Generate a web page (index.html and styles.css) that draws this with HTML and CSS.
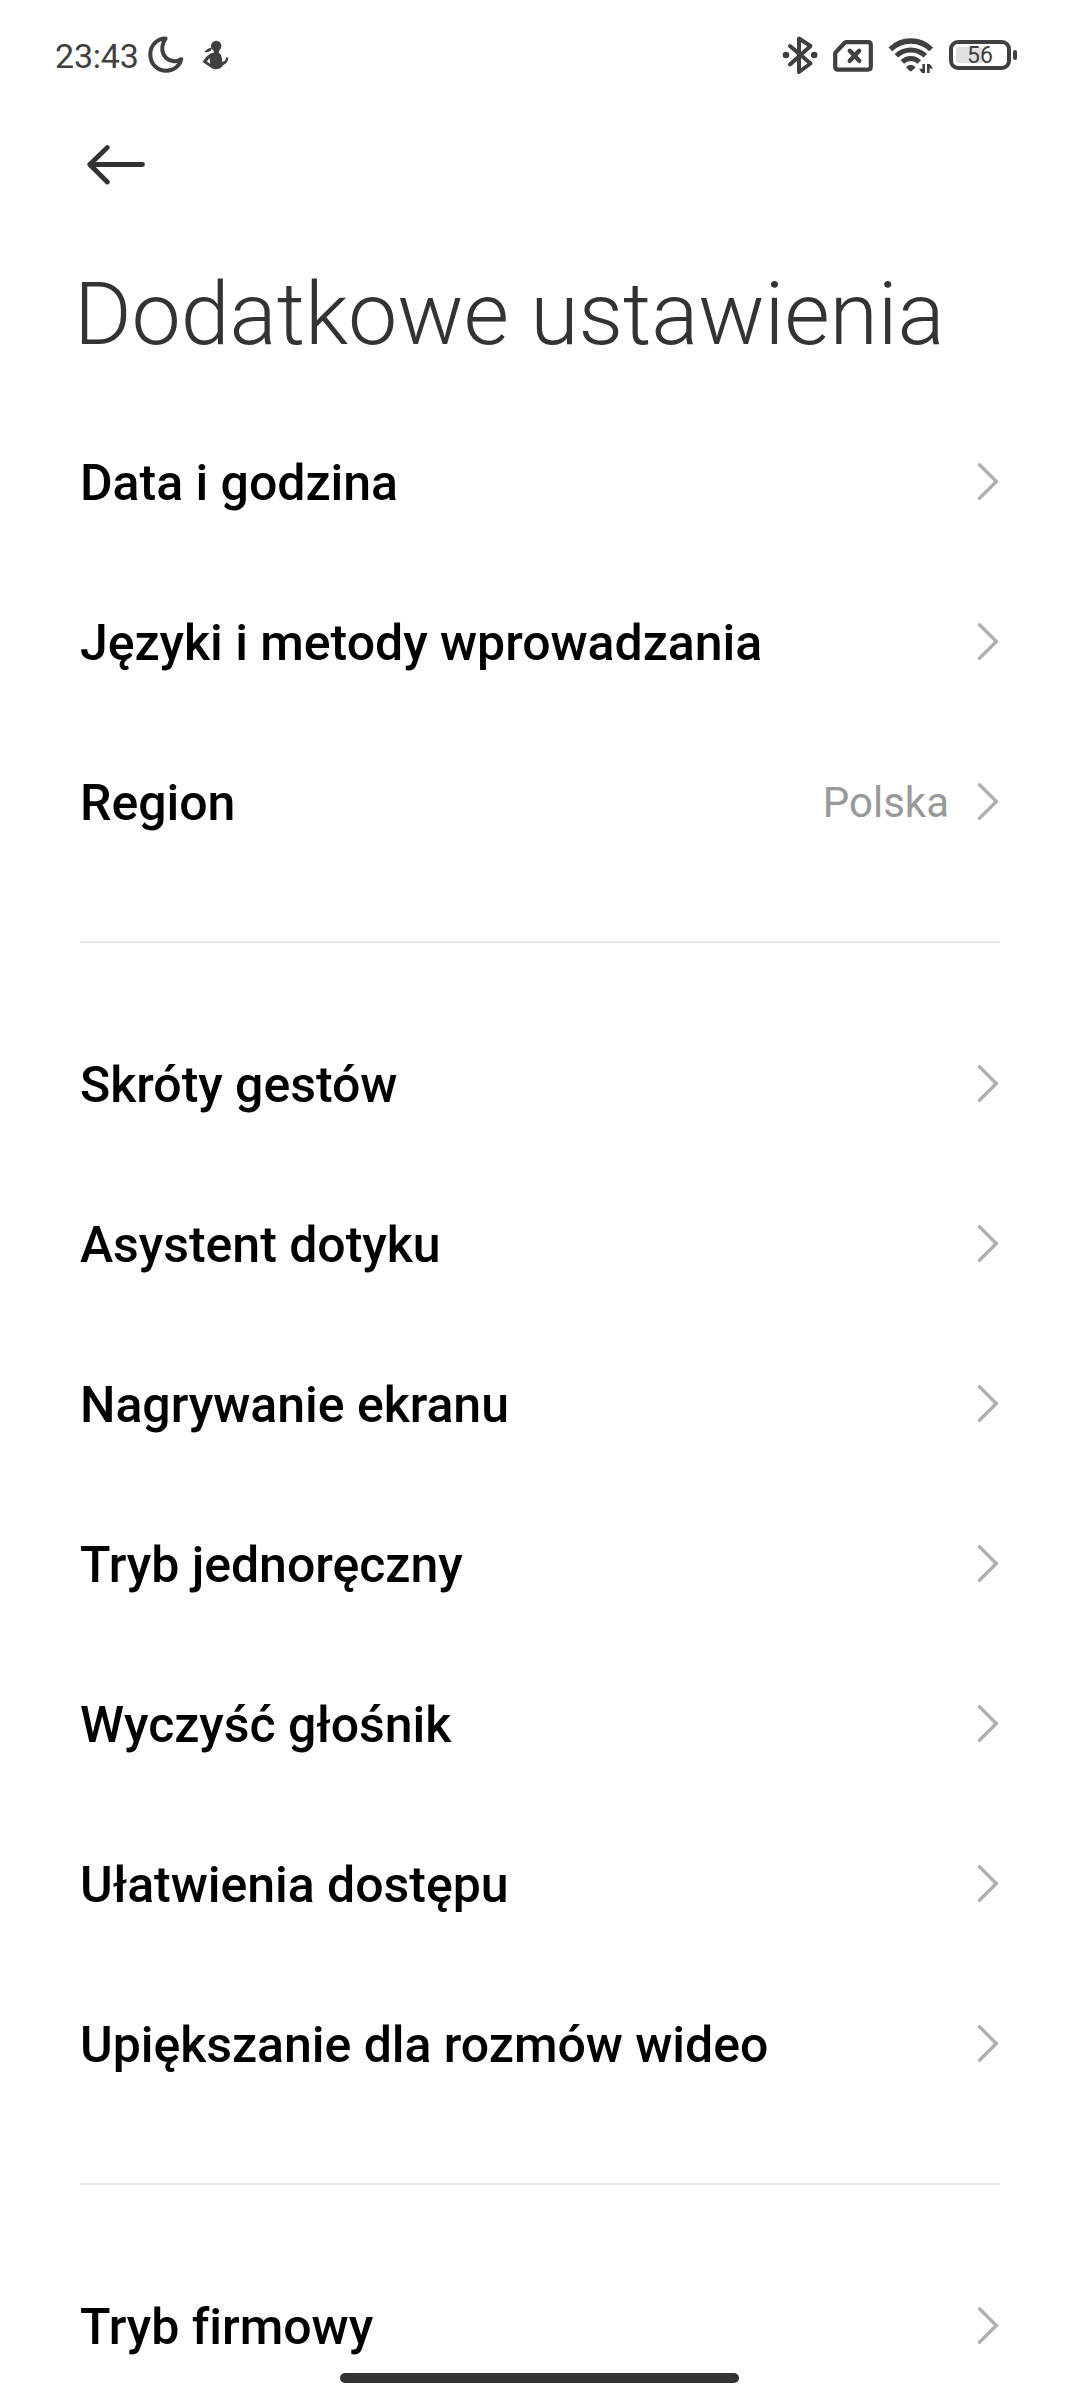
FILE: index.html
```html
<!DOCTYPE html>
<html lang="pl">
<head>
    <meta charset="UTF-8">
    <meta name="viewport" content="width=device-width, initial-scale=1.0">
    <title>Dodatkowe ustawienia</title>
    <link rel="stylesheet" href="styles.css">
</head>
<body>
    <svg width="0" height="0" class="sprite">
        <symbol id="chevron" viewBox="0 0 24 40">
            <path d="M3.5 3.7 L20.3 20.5 L3.5 37.3" fill="none" stroke="#b0b0b0" stroke-width="3.4" stroke-linecap="round" stroke-linejoin="miter"/>
        </symbol>
    </svg>
    <div class="screen">
        <div class="status-bar">
            <span class="time">23:43</span>
            <!-- Nie przeszkadzać -->
            <svg class="icon moon" width="36" height="38" viewBox="0 0 36 38">
                <path d="M17.6 2.6 C9 2.6 2.3 9.5 2.3 18.5 C2.3 27.8 9.2 34.8 18.3 34.8 C25.8 34.8 31.5 30 33.2 23.2 C31 24.9 28.5 25.5 26 25.3 C19.5 24.8 14.7 20 14.3 13.5 C14.1 9.2 15.4 5.6 17.6 2.6 Z" fill="none" stroke="#404040" stroke-width="4" stroke-linejoin="round"/>
            </svg>
            <svg class="icon figure" width="27" height="30" viewBox="0 0 27 30">
                <circle cx="14.2" cy="6" r="5.2" fill="#404040"/>
                <path d="M12 8 L17.5 9 L16.5 14 L11.5 14 Z M10 7.5 L9 10.5 Q6 12.8 2.5 12 Q5 8 10 7.5 Z" fill="#404040"/>
                <path d="M8.5 13.5 Q13 12 18 13.5 Q20.5 17 20 22 L23 20.8 L24.3 17.2 L26.2 17.5 Q26.5 22.5 21.5 25 Q18.5 29.3 13.5 29.2 Q9.5 29 7.5 26.5 L0.5 22 Q3.5 16.5 8.5 13.5 Z M7.5 18 L4.8 21.4 L8.2 23.8 Z" fill="#404040" fill-rule="evenodd"/>
            </svg>
            <div class="status-right">
                <!-- Bluetooth -->
                <svg class="icon bluetooth" width="36" height="40" viewBox="0 0 36 40">
                    <path d="M8 11 L28.5 28.5 L17 37 V3.5 L28.5 11 L8 29.5" fill="none" stroke="#404040" stroke-width="4" stroke-linecap="round" stroke-linejoin="round"/>
                    <circle cx="4" cy="20" r="3.3" fill="#404040"/>
                    <circle cx="32.2" cy="20" r="3.3" fill="#404040"/>
                </svg>
                <!-- Brak karty SIM -->
                <svg class="icon sim" width="40" height="32" viewBox="0 0 40 32">
                    <path d="M13.2 2.2 H35 Q37.8 2.2 37.8 5 V26.8 Q37.8 29.6 35 29.6 H5 Q2.2 29.6 2.2 26.8 V14 Q2.2 12.8 3 12 L11.5 3 Q12.2 2.2 13.2 2.2 Z" fill="none" stroke="#404040" stroke-width="4.2"/>
                    <path d="M16.8 10.8 L26.2 20.8 M26.2 10.8 L16.8 20.8" stroke="#404040" stroke-width="4.4" stroke-linecap="round"/>
                </svg>
                <!-- Wi-Fi -->
                <svg class="icon wifi" width="48" height="36" viewBox="0 0 48 36">
                    <path d="M2.4 12.4 A29 29 0 0 1 43.2 12.4" fill="none" stroke="#404040" stroke-width="5.4"/>
                    <path d="M8.3 18.7 A21 21 0 0 1 37.3 18.7" fill="none" stroke="#404040" stroke-width="5"/>
                    <path d="M14.3 25 A12 12 0 0 1 31.3 25" fill="none" stroke="#404040" stroke-width="5"/>
                    <path d="M18 30.5 Q19.5 27.8 22.8 27.8 Q26 27.8 27.6 30.5 L24 33.8 Q22.8 35 21.6 33.8 Z" fill="#404040"/>
                    <path d="M37 27 V36 H34 L31 31.8 H34.4 V27 Z M39 36 V27 H41.8 L45 31.4 H41.6 V36 Z" fill="#404040"/>
                </svg>
                <!-- Bateria -->
                <div class="battery">
                    <div class="battery-level"></div>
                    <span class="battery-text">56</span>
                </div>
                <div class="battery-cap"></div>
            </div>
        </div>

        <div class="toolbar">
            <svg class="back" width="58" height="40" viewBox="0 0 58 40">
                <path d="M20.3 2.6 L2.8 19.5 L20.3 37 M4 19.5 H55.5" fill="none" stroke="#333" stroke-width="4.8" stroke-linecap="round" stroke-linejoin="round"/>
            </svg>
        </div>

        <h1 class="title">Dodatkowe ustawienia</h1>

        <div class="list">
            <div class="row">
                <span class="label">Data i godzina</span>
                <svg class="chevron"><use href="#chevron"/></svg>
            </div>
            <div class="row">
                <span class="label">Języki i metody wprowadzania</span>
                <svg class="chevron"><use href="#chevron"/></svg>
            </div>
            <div class="row">
                <span class="label">Region</span>
                <span class="value">Polska</span>
                <svg class="chevron"><use href="#chevron"/></svg>
            </div>

            <div class="divider"></div>

            <div class="row">
                <span class="label">Skróty gestów</span>
                <svg class="chevron"><use href="#chevron"/></svg>
            </div>
            <div class="row">
                <span class="label">Asystent dotyku</span>
                <svg class="chevron"><use href="#chevron"/></svg>
            </div>
            <div class="row">
                <span class="label">Nagrywanie ekranu</span>
                <svg class="chevron"><use href="#chevron"/></svg>
            </div>
            <div class="row">
                <span class="label">Tryb jednoręczny</span>
                <svg class="chevron"><use href="#chevron"/></svg>
            </div>
            <div class="row">
                <span class="label">Wyczyść głośnik</span>
                <svg class="chevron"><use href="#chevron"/></svg>
            </div>
            <div class="row">
                <span class="label">Ułatwienia dostępu</span>
                <svg class="chevron"><use href="#chevron"/></svg>
            </div>
            <div class="row">
                <span class="label">Upiększanie dla rozmów wideo</span>
                <svg class="chevron"><use href="#chevron"/></svg>
            </div>

            <div class="divider"></div>

            <div class="row">
                <span class="label">Tryb firmowy</span>
                <svg class="chevron"><use href="#chevron"/></svg>
            </div>
        </div>

        <div class="home-bar"></div>
    </div>
</body>
</html>
```

FILE: styles.css
```css
body {
    margin: 0;
    background-color: #fefefe;
    font-family: Roboto, "Noto Sans", sans-serif;
    color: #000;
}

.sprite {
    position: absolute;
}

.screen {
    position: relative;
    width: 1080px;
    height: 2400px;
    overflow: hidden;
}

.status-bar {
    display: flex;
    align-items: center;
    height: 110px;
    padding: 0 63px 0 55px;
    box-sizing: border-box;
    color: #404040;
}

.icon {
    display: block;
    flex: none;
}

.time {
    width: 93px;
    font-size: 34px;
    font-weight: 450;
    line-height: 40px;
    letter-spacing: -0.2px;
    margin-top: 2px;
}

.figure {
    margin-left: 18px;
}

.status-right {
    display: flex;
    align-items: center;
    margin-left: auto;
}

.sim {
    margin: 2px 15px 0;
}

.battery {
    position: relative;
    width: 62px;
    height: 30px;
    margin-left: 13px;
    border: 4px solid #404040;
    border-radius: 9px;
    box-sizing: border-box;
    text-align: center;
}

.battery-level {
    position: absolute;
    left: 3px;
    top: 3px;
    width: 27px;
    height: 16px;
    border-radius: 3px;
    background-color: #e0e0e0;
}

.battery-text {
    position: relative;
    display: block;
    font-size: 23px;
    line-height: 24px;
}

.battery-cap {
    width: 4px;
    height: 10px;
    margin-left: 2px;
    border-radius: 2px;
    background-color: #404040;
}

.toolbar {
    display: flex;
    align-items: center;
    height: 108px;
    padding-left: 87px;
}

.back {
    margin-top: 2px;
}

.title {
    margin: 44px 0 0 74px;
    height: 139px;
    font-size: 88px;
    line-height: 104px;
    font-weight: 300;
    letter-spacing: -0.1px;
    color: #333;
}

.list {
    padding: 0 80px;
}

.row {
    display: flex;
    align-items: center;
    height: 160px;
}

.label {
    flex: 1;
    font-size: 50px;
    line-height: 60px;
    font-weight: 500;
    letter-spacing: -0.03px;
    margin-top: 3px;
}

.value {
    margin: 3px 27px 0 0;
    font-size: 42px;
    line-height: 50px;
    color: #999;
}

.chevron {
    width: 24px;
    height: 40px;
}

.divider {
    height: 2px;
    margin: 60px 0;
    background-color: #e6e6e6;
}

.home-bar {
    position: absolute;
    left: 340px;
    bottom: 17px;
    width: 399px;
    height: 10px;
    border-radius: 5px;
    background-color: #333;
}
```
